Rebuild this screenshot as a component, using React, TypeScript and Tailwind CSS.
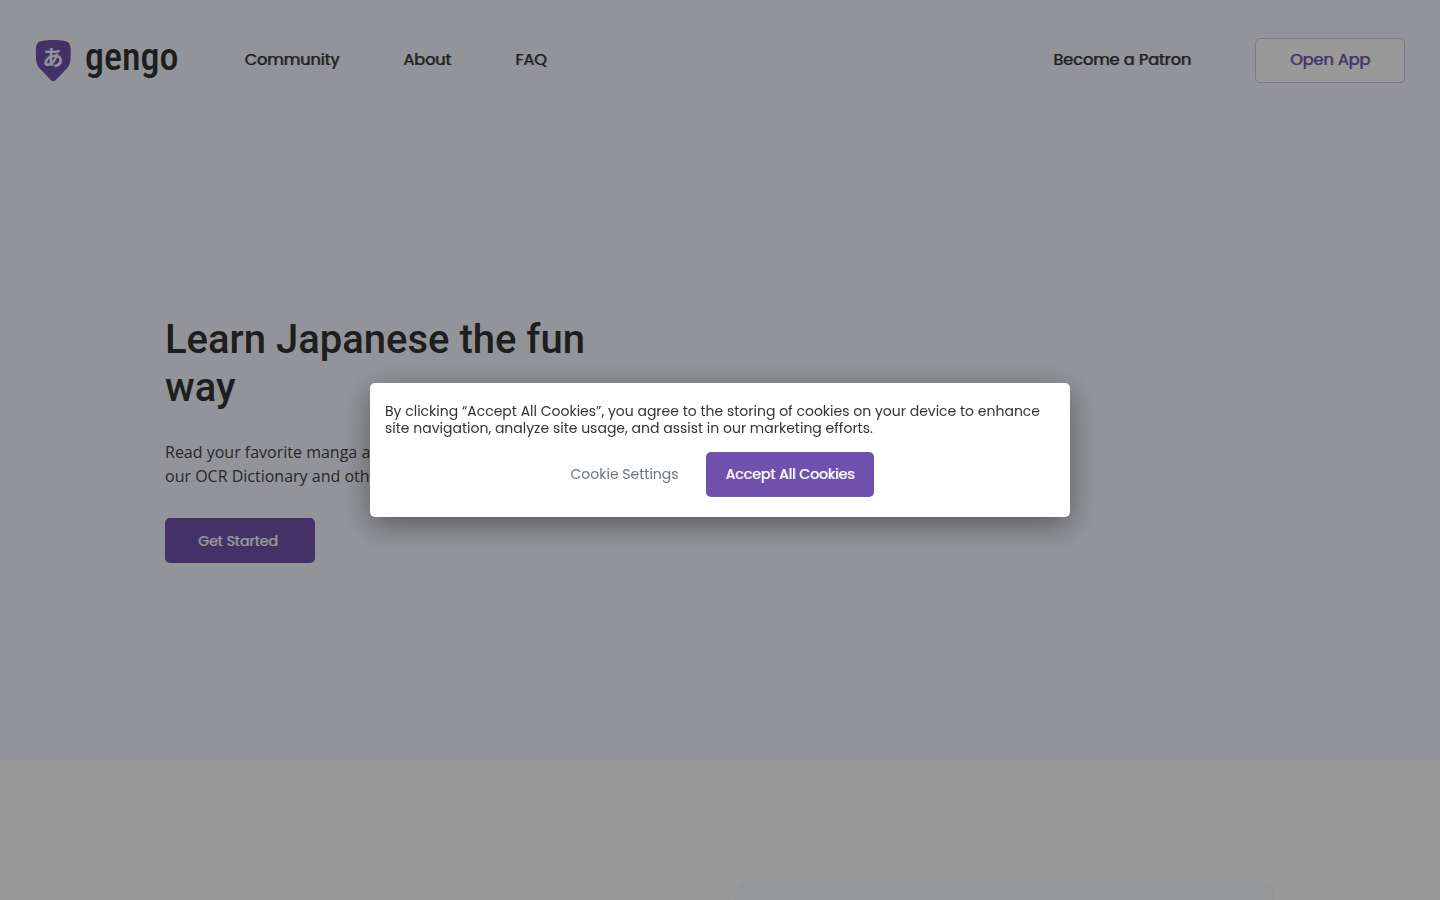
import React, { useState } from 'react';

const mainLinks = [
  { label: 'Community', href: '#community' },
  { label: 'About', href: '#about' },
  { label: 'FAQ', href: '#faq' },
];

const Logo: React.FC = () => (
  <a href="#home" className="flex items-center gap-3.5 pt-0.5 pr-0.5">
    <svg viewBox="0 0 36 42" className="h-[42px] w-9" aria-hidden="true">
      <path
        d="M7 1 C13 -0.2 23 -0.2 29.5 1 C33.5 1.6 35.2 4 35.5 7 C35.9 11 35.9 16 35.4 20.5 C35 24 33.8 26.4 31.6 28.8 L20.8 40 C19.2 41.7 17.4 41.7 15.8 40 L5 28.8 C2.8 26.4 1.6 24 1.2 20.5 C0.7 16 0.7 11 1.1 7 C1.4 4 3.1 1.6 7 1 Z"
        fill="#7052ae"
      />
      <text
        x="18"
        y="25"
        textAnchor="middle"
        fill="#f5f7ff"
        className="font-['Noto_Sans_CJK_JP',sans-serif] text-[21px] font-bold"
      >
        あ
      </text>
    </svg>
    <span className="pb-2 font-['Roboto_Condensed','Roboto',sans-serif] text-[38px] leading-10 font-medium text-[#333]">
      gengo
    </span>
  </a>
);

const Navbar: React.FC = () => (
  <header className="flex h-30 items-center justify-between px-[35px] text-base text-[#333]">
    <div className="flex items-center gap-16">
      <Logo />
      <nav className="flex items-center gap-16 [text-shadow:1px_0_0_#33333399]">
        {mainLinks.map((link) => (
          <a key={link.label} href={link.href}>{link.label}</a>
        ))}
      </nav>
    </div>
    <div className="flex items-center gap-16 [text-shadow:1px_0_0_#33333399]">
      <a href="#patron">Become a Patron</a>
      <a
        href="#app"
        className="flex h-[45px] w-[150px] items-center justify-center rounded-[5px] border border-[#d3cae6] bg-white text-[#7052ae] [text-shadow:1px_0_0_#7052ae99]"
      >
        Open App
      </a>
    </div>
  </header>
);

const Hero: React.FC = () => (
  <section className="mx-auto flex h-160 w-full max-w-[1140px] items-center px-[15px] pb-0.5">
    <div className="w-full max-w-[450px]">
      <h1 className="mb-7 font-['Roboto',sans-serif] text-[40px] leading-12 font-medium text-[#333]">
        Learn Japanese the fun way
      </h1>
      <p className="mb-[30px] max-w-[390px] font-['Open_Sans',sans-serif] text-base leading-6 text-[#444]">
        Read your favorite manga and learn Japanese with our OCR Dictionary and other tools.
      </p>
      <a
        href="#app"
        className="flex h-[45px] w-[150px] items-center rounded-[5px] bg-[#7052ae] px-[33px] pt-0.5 text-sm text-white [text-shadow:1px_0_0_#ffffff99]"
      >
        Get Started
      </a>
    </div>
  </section>
);

const App: React.FC = () => {
  const [open, setOpen] = useState(true);

  return (
    <div className="h-screen overflow-hidden bg-white font-['Poppins','Inter',sans-serif]">
      <div className="bg-[#f5f7ff]">
        <Navbar />
        <Hero />
      </div>

      {/* Features */}
      <section className="mx-auto flex max-w-[1140px] justify-end px-[15px] pt-30">
        <div className="h-100 w-[540px] rounded-xl bg-[#f7fafc]" />
      </section>

      {/* Cookie consent */}
      {open && (
        <div className="fixed inset-0 flex items-center justify-center bg-black/40">
          <div
            role="dialog"
            aria-label="Cookies"
            className="w-full max-w-[700px] rounded-[5px] bg-white px-[15px] py-5 text-sm shadow-[0_8px_30px_rgba(0,0,0,0.4)]"
          >
            <p className="mb-[15px] leading-[17px] text-[#333]">
              By clicking “Accept All Cookies”, you agree to the storing of cookies on your device to enhance
              site navigation, analyze site usage, and assist in our marketing efforts.
            </p>
            <div className="flex justify-center gap-[22px]">
              <button type="button" className="h-[45px] px-[5px] pb-0.5 text-[#6c757d]">
                Cookie Settings
              </button>
              <button
                type="button"
                onClick={() => setOpen(false)}
                className="h-[45px] rounded-[5px] bg-[#7052ae] px-5 pb-0.5 text-white [text-shadow:1px_0_0_#ffffff99]"
              >
                Accept All Cookies
              </button>
            </div>
          </div>
        </div>
      )}
    </div>
  );
};

export default App;
